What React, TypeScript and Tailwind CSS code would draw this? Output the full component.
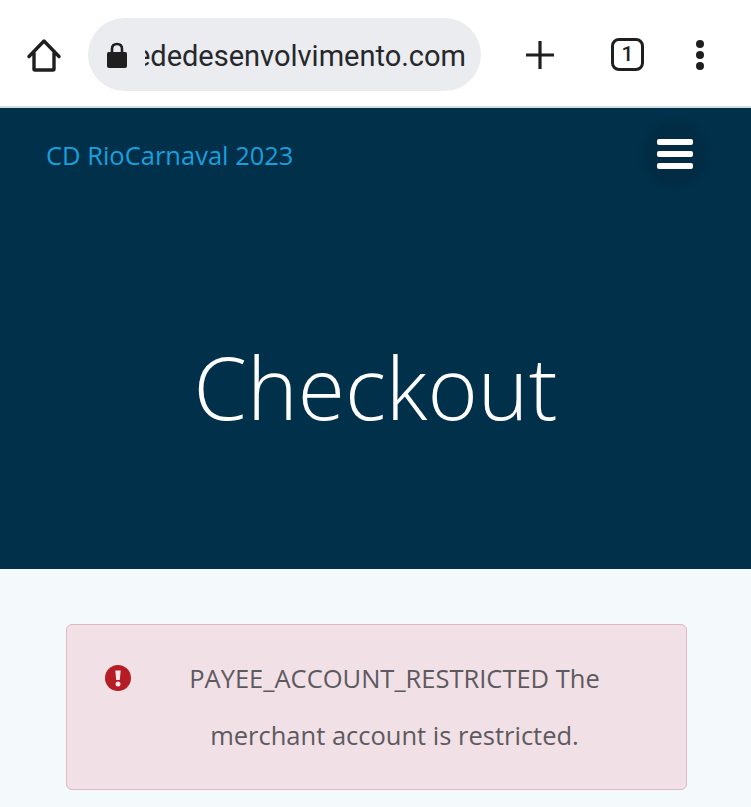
export default function App() {
  return (
    <div className="w-[751px] h-[807px] overflow-hidden flex flex-col bg-[#f4f9fc] font-['Open_Sans',sans-serif]">
      <div className="h-[108px] shrink-0 bg-white border-b-2 border-[#d3dde5] flex items-center pl-[26px] pt-[3px]">
        <svg width="36" height="36" viewBox="0 0 36 36" fill="none" stroke="#1f1f1f" strokeWidth="3.4" strokeLinejoin="round" strokeLinecap="round" className="shrink-0">
          <path d="M3 19.5 L18 4 L33 19.5 M8 16 V32 Q8 33 9 33 H27 Q28 33 28 32 V16" />
        </svg>
        <div className="ml-[26px] w-[393px] h-[73px] shrink-0 rounded-full bg-[#ebecef] flex items-center pl-[18px] pr-[15px]">
          <svg width="22" height="26" viewBox="0 0 22 26" className="shrink-0" fill="#1f1f1f">
            <path d="M2.5 10 H19.5 Q21 10 21 12 V24 Q21 26 19 26 H3 Q1 26 1 24 V12 Q1 10 2.5 10Z" />
            <path d="M6 11 V7 Q6 2 11 2 Q16 2 16 7 V11" fill="none" stroke="#1f1f1f" strokeWidth="2.6" />
          </svg>
          <div className="ml-[17px] w-[321px] pt-[4px] overflow-hidden flex justify-end font-['Roboto',sans-serif] text-[29px] text-[#26282b] whitespace-nowrap">
            <span>rededesenvolvimento.com</span>
          </div>
        </div>
        <svg width="28" height="28" viewBox="0 0 28 28" stroke="#1f1f1f" strokeWidth="3.2" className="ml-[45px] shrink-0">
          <path d="M0 14 H28 M14 0 V28" />
        </svg>
        <div className="ml-[57px] w-[33px] h-[33px] shrink-0 rounded-[8px] border-[3.5px] border-[#1f1f1f] flex items-center justify-center font-['Roboto',sans-serif] font-medium text-[21px] leading-none text-[#1f1f1f]">
          1
        </div>
        <div className="ml-[52px] flex flex-col gap-[3px] shrink-0">
          <div className="w-[8px] h-[8px] rounded-full bg-[#1f1f1f]" />
          <div className="w-[8px] h-[8px] rounded-full bg-[#1f1f1f]" />
          <div className="w-[8px] h-[8px] rounded-full bg-[#1f1f1f]" />
        </div>
      </div>

      <div className="h-[461px] shrink-0 bg-[#00304a] flex flex-col">
        <div className="h-[94px] shrink-0 flex items-center justify-between pl-[46px] pr-[46px]">
          <span className="text-[25.5px] text-[#1a9fdd]">CD RioCarnaval 2023</span>
          <div className="w-[60px] h-[60px] mb-[2px] rounded-full bg-[#012c44] shadow-[0_0_6px_#012c44] flex flex-col items-center justify-center gap-[6px]">
            <div className="w-[36px] h-[6px] rounded-[2px] bg-white" />
            <div className="w-[36px] h-[6px] rounded-[2px] bg-white" />
            <div className="w-[36px] h-[6px] rounded-[2px] bg-white" />
          </div>
        </div>
        <div className="flex justify-center pt-[120px]">
          <h1 className="text-[86px] font-light leading-[130px] text-white">Checkout</h1>
        </div>
      </div>

      <div className="ml-[66px] w-[621px] mt-[55px] h-[166px] shrink-0 rounded-[6px] border border-[#dfb8c3] bg-[#f1e0e6] flex">
        <svg width="28" height="28" viewBox="0 0 28 28" className="ml-[37px] mt-[39px] shrink-0">
          <circle cx="14" cy="14" r="13" fill="#b51c24" />
          <path d="M11.3 6.5 H16.7 L15.8 16 H12.2 Z" fill="#f6e6ea" />
          <circle cx="14" cy="20" r="2.5" fill="#f6e6ea" />
        </svg>
        <p className="w-[500px] pl-[25px] pt-[25px] text-center text-[25.5px] leading-[57px] text-[#5d5a5f]">
          PAYEE_ACCOUNT_RESTRICTED The merchant account is restricted.
        </p>
      </div>
    </div>
  );
}
